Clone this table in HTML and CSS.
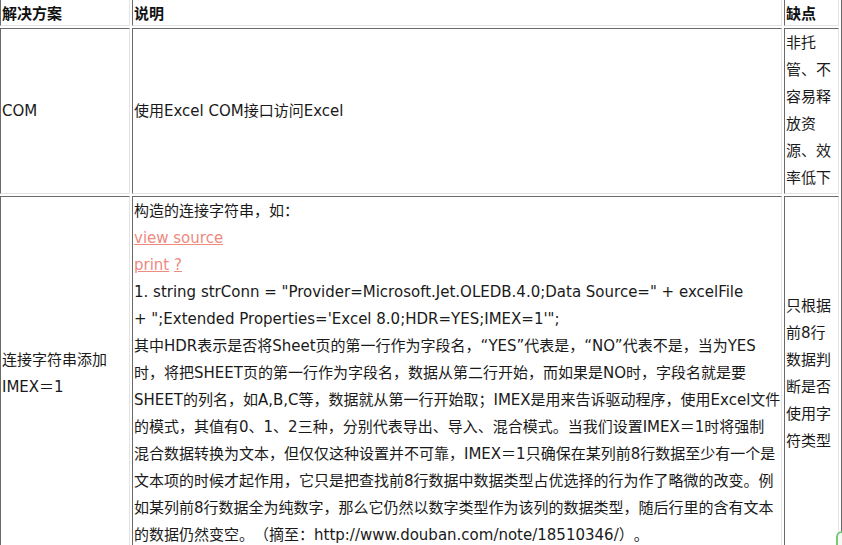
FILE: index.html
```html
<!DOCTYPE html>
<html lang="zh-CN">
<head>
<meta charset="utf-8">
<title>解决方案</title>
<link rel="stylesheet" href="styles.css">
</head>
<body>
<table class="grid">
  <colgroup>
    <col class="c1">
    <col class="c2">
    <col class="c3">
  </colgroup>
  <thead>
    <tr>
      <th>解决方案</th>
      <th>说明</th>
      <th>缺点</th>
    </tr>
  </thead>
  <tbody>
    <tr>
      <td>COM</td>
      <td>使用Excel COM接口访问Excel</td>
      <td>非托管、不容易释放资源、效率低下</td>
    </tr>
    <tr>
      <td>连接字符串添加IMEX＝1</td>
      <td>
        <div>构造的连接字符串，如：</div>
        <div><a href="#">view source</a></div>
        <div><a href="#">print</a> <a href="#">?</a></div>
        <div>1. string strConn = "Provider=Microsoft.Jet.OLEDB.4.0;Data Source=" + excelFile<br>+ ";Extended Properties='Excel 8.0;HDR=YES;IMEX=1'";</div>
        <div>其中HDR表示是否将Sheet页的第一行作为字段名，“YES”代表是，“NO”代表不是，当为YES<br>时，将把SHEET页的第一行作为字段名，数据从第二行开始，而如果是NO时，字段名就是要<br>SHEET的列名，如A,B,C等，数据就从第一行开始取；IMEX是用来告诉驱动程序，使用Excel文件<br>的模式，其值有0、1、2三种，分别代表导出、导入、混合模式。当我们设置IMEX＝1时将强制<br>混合数据转换为文本，但仅仅这种设置并不可靠，IMEX＝1只确保在某列前8行数据至少有一个是<br>文本项的时候才起作用，它只是把查找前8行数据中数据类型占优选择的行为作了略微的改变。例<br>如某列前8行数据全为纯数字，那么它仍然以数字类型作为该列的数据类型，随后行里的含有文本<br>的数据仍然变空。（摘至：http://www.douban.com/note/18510346/）。</div>
      </td>
      <td>只根据前8行数据判断是否使用字符类型</td>
    </tr>
  </tbody>
</table>
<div class="widget"></div>
</body>
</html>
```
FILE: styles.css
```css
html, body {
  margin: 0;
  padding: 0;
  background: #fff;
  overflow: hidden;
}
body {
  font-family: "DejaVu Sans", "Noto Sans CJK SC", sans-serif;
  font-size: 15px;
  color: #1a1a1a;
  text-spacing-trim: space-all;
}
.grid {
  table-layout: fixed;
  width: 845px;
  margin: -4px 0 0 -3px;
  border-collapse: separate;
  border-spacing: 2px;
  border: 1px solid;
  border-color: #e4e4e4 #6a6a6a #6a6a6a #e4e4e4;
}
.c1 { width: 130px; }
.c3 { width: 55px; }
.grid th,
.grid td {
  box-sizing: border-box;
  padding: 1px 0 1px 1px;
  border: 1px solid;
  border-color: #6a6a6a #e4e4e4 #e4e4e4 #6a6a6a;
  text-align: left;
  vertical-align: middle;
  line-height: 27px;
  word-wrap: break-word;
}
.grid th {
  font-family: "Noto Sans CJK SC", sans-serif;
  font-weight: bold;
  line-height: 23px;
  color: #111;
}
.grid a {
  color: #ee8a80;
  text-decoration: underline;
}
.widget {
  position: fixed;
  right: -6px;
  bottom: -8px;
  width: 8px;
  height: 18px;
  border: 2px solid #7bc67b;
  border-radius: 6px;
  background: #f4fbf4;
}
```
